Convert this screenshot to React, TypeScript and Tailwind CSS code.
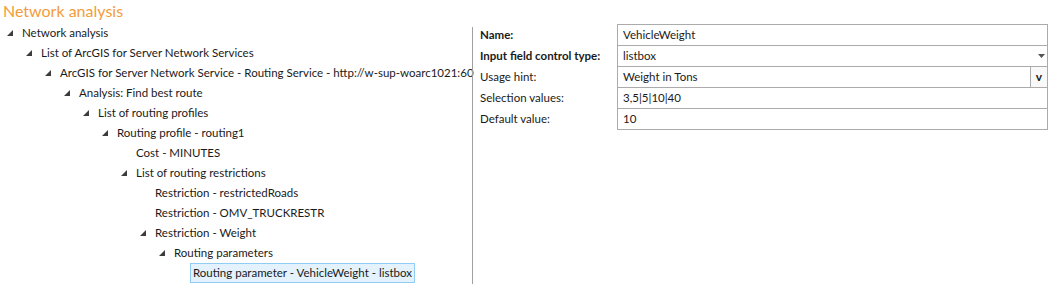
import React from 'react'

type Node = { label: string; level: number; open?: boolean; selected?: boolean }

const tree: Node[] = [
    { label: 'Network analysis', level: 0, open: true },
    { label: 'List of ArcGIS for Server Network Services', level: 1, open: true },
    { label: 'ArcGIS for Server Network Service - Routing Service - http://w-sup-woarc1021:60', level: 2, open: true },
    { label: 'Analysis: Find best route', level: 3, open: true },
    { label: 'List of routing profiles', level: 4, open: true },
    { label: 'Routing profile - routing1', level: 5, open: true },
    { label: 'Cost - MINUTES', level: 6 },
    { label: 'List of routing restrictions', level: 6, open: true },
    { label: 'Restriction - restrictedRoads', level: 7 },
    { label: 'Restriction - OMV_TRUCKRESTR', level: 7 },
    { label: 'Restriction - Weight', level: 7, open: true },
    { label: 'Routing parameters', level: 8, open: true },
    { label: 'Routing parameter - VehicleWeight - listbox', level: 9, selected: true },
]

const Expander = () => (
    <svg width="6" height="6" viewBox="0 0 6 6" className="shrink-0">
        <polygon points="6,0 6,6 0,6" fill="#3c3c3c" />
    </svg>
)

const TreeRow = ({ node }: { node: Node }) => (
    <div className="h-[20px] flex items-center whitespace-nowrap" style={{ paddingLeft: 3 + node.level * 19 }}>
        <div className="w-[19px] shrink-0 flex items-center justify-start pl-[4px]">{node.open && <Expander />}</div>
        {node.selected ? (
            <span className="h-[20px] -ml-[3px] px-[2px] flex items-center border border-[#90cdf5] bg-[#e3f2fc] text-[#1a1a1a]">
                {node.label}
            </span>
        ) : (
            <span className="text-[#1a1a1a]">{node.label}</span>
        )}
    </div>
)

const fields = [
    { label: 'Name:', value: 'VehicleWeight', bold: true },
    { label: 'Input field control type:', value: 'listbox', bold: true, select: true },
    { label: 'Usage hint:', value: 'Weight in Tons', button: true },
    { label: 'Selection values:', value: '3,5|5|10|40' },
    { label: 'Default value:', value: '10' },
]

export default function App() {
    return (
        <div
            className="w-[1052px] h-[284px] bg-white overflow-hidden text-[11.5px]"
            style={{ fontFamily: 'Lato, "Open Sans", sans-serif' }}
        >
            <div className="h-[23px] pl-[3px] text-[16px] leading-[22px] text-[#f39c3a]">Network analysis</div>
            <div className="flex">
                <div className="w-[472px] shrink-0">
                    {tree.map(n => (
                        <TreeRow key={n.label} node={n} />
                    ))}
                </div>
                <div className="w-px bg-[#a0a0a0] mt-[4px] h-[257px]" />
                <div className="flex-1 pl-[7px] pt-[1px] pr-[4px]">
                    {fields.map((f, i) => (
                        <div key={f.label} className={`flex h-[22px] ${i > 0 ? '-mt-px' : ''}`}>
                            <div
                                className={`w-[137px] shrink-0 whitespace-nowrap flex items-center text-[#1a1a1a] ${f.bold ? 'font-bold' : ''}`}
                            >
                                {f.label}
                            </div>
                            <div className="flex-1 flex border border-[#ababab] h-[22px]">
                                <div className="flex-1 flex items-center pl-[5px] text-[#1a1a1a]">{f.value}</div>
                                {f.select && (
                                    <div className="w-[12px] flex items-center justify-center">
                                        <svg width="7" height="4" viewBox="0 0 7 4">
                                            <polygon points="0,0 7,0 3.5,4" fill="#555" />
                                        </svg>
                                    </div>
                                )}
                                {f.button && (
                                    <div className="w-[17px] border-l border-[#ababab] bg-[#f9f9f9] flex items-center justify-center font-bold text-[12px] text-[#1a1a1a]">
                                        v
                                    </div>
                                )}
                            </div>
                        </div>
                    ))}
                </div>
            </div>
        </div>
    )
}
